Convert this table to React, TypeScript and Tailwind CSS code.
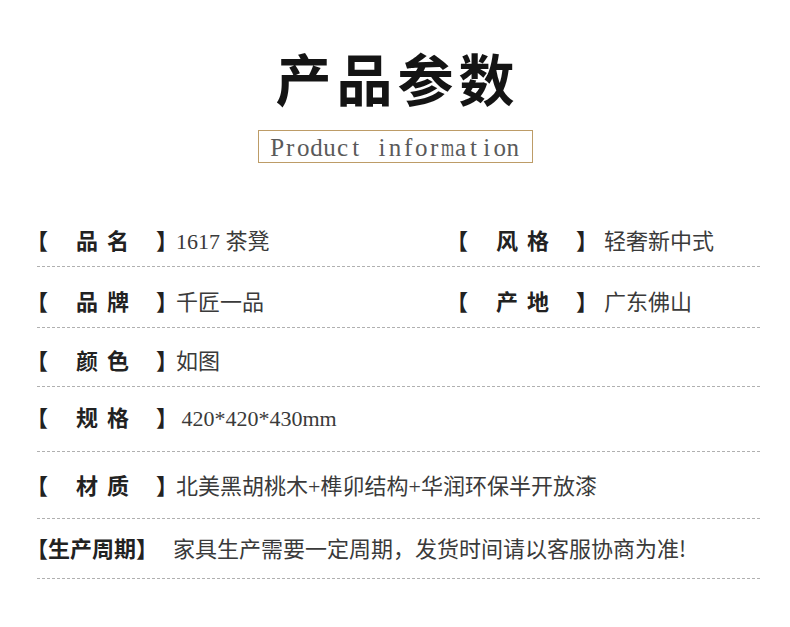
import React from "react";

const VAL = "font-['Noto_Sans_CJK_SC',sans-serif] text-[22px] leading-[24px] text-[#3a3a3a] whitespace-pre";
const LAB = "font-['Noto_Sans_CJK_SC',sans-serif] text-[22px] leading-[24px] font-semibold text-[#222] whitespace-nowrap";

function Mixed({ text }: { text: string }) {
  const parts = text.split(/([\x00-\x7F]+)/).filter((p) => p.length > 0);
  return (
    <>
      {parts.map((p, i) =>
        /^[\x00-\x7F]+$/.test(p) ? (
          <span key={i} className="font-['Liberation_Serif',serif] leading-[12px]">
            {p}
          </span>
        ) : (
          <span key={i}>{p}</span>
        )
      )}
    </>
  );
}

function Dashed() {
  return (
    <div className="h-px w-full bg-[repeating-linear-gradient(to_right,#b0b0b0_0px,#b0b0b0_3px,transparent_3px,transparent_5px)]" />
  );
}

function Label({ a, b }: { a: string; b: string }) {
  return (
    <div className={`flex w-[130px] items-center ${LAB}`}>
      <span className="[font-feature-settings:'halt']">【</span>
      <span className="ml-[28px]">{a}</span>
      <span className="ml-[9px]">{b}</span>
      <span className="ml-auto [font-feature-settings:'halt']">】</span>
    </div>
  );
}

function Cell({ a, b, v, right }: { a: string; b: string; v: string; right?: boolean }) {
  return (
    <div className="flex items-center">
      <Label a={a} b={b} />
      <span className={`${right ? "ml-[17px]" : "ml-[9px]"} ${VAL}`}>
        <Mixed text={v} />
      </span>
    </div>
  );
}

function Row({ pt, pb, children }: { pt: string; pb: string; children: React.ReactNode }) {
  return (
    <div>
      <div className={`${pt} ${pb} flex items-center h-auto`}>{children}</div>
      <Dashed />
    </div>
  );
}

const EN = "Product information".split("");

export default function App() {
  return (
    <div className="w-[790px] h-[627px] bg-white overflow-hidden">
      <div className="pt-[49px] flex justify-center">
        <h1 className="font-['Noto_Sans_CJK_SC',sans-serif] text-[56px] leading-[56px] font-semibold text-[#141414] tracking-[5px] pl-[5px]">
          产品参数
        </h1>
      </div>
      <div className="mt-[25px] flex justify-center">
        <div className="w-[275px] h-[33px] border border-[#bd9c67] flex items-center justify-center">
          <div className="flex font-['Liberation_Serif',serif] text-[25px] leading-none text-[#5a5a5a] pt-[2px]">
            {EN.map((c, i) => (
              <span
                key={i}
                className={`w-[13.1px] flex justify-center whitespace-pre ${c === "m" ? "scale-x-[0.68]" : ""}`}
              >
                {c}
              </span>
            ))}
          </div>
        </div>
      </div>
      <div className="ml-[37px] w-[723px] mt-[64px]">
        <Row pt="pt-0" pb="pb-[15px]">
          <div className="w-[420px]">
            <Cell a="品" b="名" v="1617 茶凳" />
          </div>
          <Cell a="风" b="格" v="轻奢新中式" right />
        </Row>
        <Row pt="pt-[21px]" pb="pb-[15px]">
          <div className="w-[420px]">
            <Cell a="品" b="牌" v="千匠一品" />
          </div>
          <Cell a="产" b="地" v="广东佛山" right />
        </Row>
        <Row pt="pt-[19px]" pb="pb-[15px]">
          <Cell a="颜" b="色" v="如图" />
        </Row>
        <Row pt="pt-[17px]" pb="pb-[23px]">
          <Cell a="规" b="格" v=" 420*420*430mm" />
        </Row>
        <Row pt="pt-[20px]" pb="pb-[22px]">
          <Cell a="材" b="质" v="北美黑胡桃木+榫卯结构+华润环保半开放漆" />
        </Row>
        <Row pt="pt-[16px]" pb="pb-[19px]">
          <span className={`${LAB} [font-feature-settings:'halt']`}>【生产周期】</span>
          <span className={`ml-[26px] ${VAL}`}>家具生产需要一定周期，发货时间请以客服协商为准!</span>
        </Row>
      </div>
    </div>
  );
}
